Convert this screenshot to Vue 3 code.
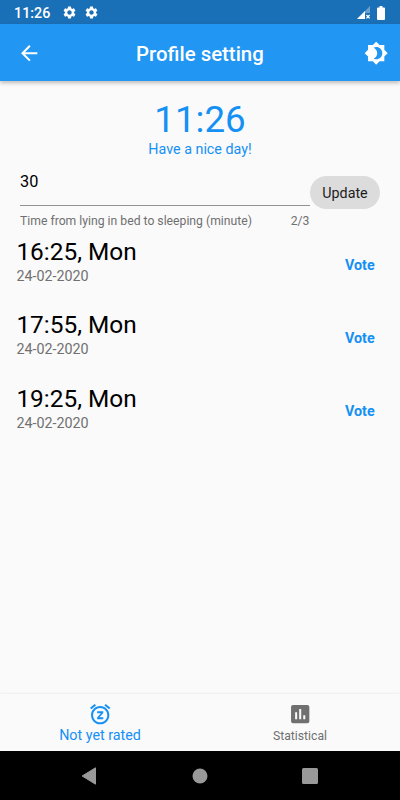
<script setup>
import { ref } from 'vue'

const minutes = ref('30')
const records = [
  { time: '16:25, Mon', date: '24-02-2020' },
  { time: '17:55, Mon', date: '24-02-2020' },
  { time: '19:25, Mon', date: '24-02-2020' },
]
const gear =
  'M19.14 12.94c.04-.3.06-.61.06-.94s-.02-.64-.07-.94l2.03-1.58c.18-.14.23-.41.12-.61l-1.92-3.32c-.12-.22-.37-.29-.59-.22l-2.39.96c-.5-.38-1.03-.7-1.62-.94l-.36-2.54c-.04-.24-.24-.41-.48-.41h-3.84c-.24 0-.43.17-.47.41l-.36 2.54c-.59.24-1.13.57-1.62.94l-2.39-.96c-.22-.08-.47 0-.59.22L2.74 8.87c-.12.21-.08.47.12.61l2.03 1.58c-.05.3-.09.63-.09.94s.02.64.07.94l-2.03 1.58c-.18.14-.23.41-.12.61l1.92 3.32c.12.22.37.29.59.22l2.39-.96c.5.38 1.03.7 1.62.94l.36 2.54c.05.24.24.41.48.41h3.84c.24 0 .44-.17.47-.41l.36-2.54c.59-.24 1.13-.56 1.62-.94l2.39.96c.22.08.47 0 .59-.22l1.92-3.32c.12-.22.07-.47-.12-.61l-2.01-1.58zM12 15.6c-1.98 0-3.6-1.62-3.6-3.6s1.62-3.6 3.6-3.6 3.6 1.62 3.6 3.6-1.62 3.6-3.6 3.6z'
</script>

<template>
  <div class="screen">
    <div class="status">
      <span class="status-time">11:26</span>
      <svg v-for="n in 2" :key="n" class="gear" viewBox="0 0 24 24"><path :d="gear" /></svg>
      <svg class="signal" viewBox="0 0 14 14">
        <path d="M13 0v7H8v6H0z" opacity=".35" />
        <path d="M8 5v8H0z" />
        <path d="M9.4 9l3.2 3.4M12.6 9l-3.2 3.4" stroke="#fff" stroke-width="1.3" />
      </svg>
      <svg class="battery" viewBox="0 0 8 14"><path d="M2.5 0h3v1.4H7q1 0 1 1V13q0 1-1 1H1q-1 0-1-1V2.4q0-1 1-1h1.5z" /></svg>
    </div>

    <header class="appbar">
      <svg class="icon" viewBox="0 0 24 24"><path d="M20 11H7.83l5.59-5.59L12 4l-8 8 8 8 1.41-1.41L7.83 13H20v-2z" /></svg>
      <h1>Profile setting</h1>
      <svg class="icon" viewBox="0 0 24 24"><path d="M20 8.69V4h-4.69L12 .69 8.69 4H4v4.69L.69 12 4 15.31V20h4.69L12 23.31 15.31 20H20v-4.69L23.31 12 20 8.69zM12 18c-.89 0-1.74-.2-2.5-.55C11.56 16.5 13 14.42 13 12s-1.44-4.5-3.5-5.45C10.26 6.2 11.11 6 12 6c3.31 0 6 2.69 6 6s-2.69 6-6 6z" /></svg>
    </header>

    <main>
      <div class="clock">11:26</div>
      <div class="greeting">Have a nice day!</div>

      <div class="form">
        <div class="field">
          <input v-model="minutes" maxlength="3" />
          <div class="helper">
            <span>Time from lying in bed to sleeping (minute)</span>
            <span>{{ minutes.length }}/3</span>
          </div>
        </div>
        <button class="update">Update</button>
      </div>

      <div v-for="r in records" :key="r.time" class="record">
        <div>
          <div class="time">{{ r.time }}</div>
          <div class="date">{{ r.date }}</div>
        </div>
        <button class="vote">Vote</button>
      </div>
    </main>

    <nav class="tabs">
      <div class="tab active">
        <svg class="tab-icon" viewBox="0 0 24 24"><path d="M7.88 3.39L6.6 1.86 2 5.71l1.29 1.53 4.59-3.85zM22 5.72l-4.6-3.86-1.29 1.53 4.6 3.86L22 5.72zM12 4c-4.97 0-9 4.03-9 9s4.02 9 9 9c4.97 0 9-4.03 9-9s-4.03-9-9-9zm0 16c-3.87 0-7-3.13-7-7s3.13-7 7-7 7 3.13 7 7-3.13 7-7 7zm-3-9h3.63L9 15.2V17h6v-2h-3.63L15 10.8V9H9v2z" /></svg>
        <span>Not yet rated</span>
      </div>
      <div class="tab">
        <svg class="tab-icon" viewBox="0 0 24 24"><path d="M19 3H5c-1.1 0-2 .9-2 2v14c0 1.1.9 2 2 2h14c1.1 0 2-.9 2-2V5c0-1.1-.9-2-2-2zM9 17H7v-7h2v7zm4 0h-2V7h2v10zm4 0h-2v-4h2v4z" /></svg>
        <span>Statistical</span>
      </div>
    </nav>

    <div class="system">
      <svg viewBox="0 0 16 18"><path d="M13.5 .8v16.4L.2 9z" stroke="#999" stroke-width="1" stroke-linejoin="round" /></svg>
      <svg viewBox="0 0 16 18"><circle cx="8" cy="9" r="7.5" /></svg>
      <svg viewBox="0 0 16 18"><rect y="1" width="16" height="16" rx="1.5" /></svg>
    </div>
  </div>
</template>

<style>
body {
  margin: 0;
}
</style>

<style scoped>
.screen {
  width: 400px;
  height: 800px;
  display: flex;
  flex-direction: column;
  overflow: hidden;
  background: #fafafa;
  color: #000;
  font-family: Roboto, sans-serif;
}
svg {
  display: block;
  fill: currentColor;
  flex: none;
  overflow: visible;
}
button,
input {
  border: 0;
  padding: 0;
  margin: 0;
  background: none;
  font-family: inherit;
  color: inherit;
  outline: 0;
}
.status {
  height: 24px;
  flex: none;
  display: flex;
  align-items: center;
  box-sizing: border-box;
  padding: 1px 15px 0 14px;
  background: #1a70b7;
  color: #fff;
}
.status-time {
  font-size: 14.3px;
  font-weight: 500;
  width: 47.5px;
}
.gear {
  width: 15px;
  height: 15px;
  margin-right: 7.5px;
}
.signal {
  width: 14px;
  height: 14px;
  margin-left: auto;
  margin-right: 6px;
}
.battery {
  width: 8px;
  height: 14px;
}
.appbar {
  height: 57px;
  flex: none;
  display: flex;
  align-items: center;
  justify-content: space-between;
  box-sizing: border-box;
  padding: 1px 12px 0 16.6px;
  background: #2196f3;
  color: #fff;
  box-shadow: 0 2px 4px rgba(0, 0, 0, 0.25);
  z-index: 1;
}
.icon,
.tab-icon {
  width: 24.4px;
  height: 24.4px;
}
h1 {
  margin: 0 0 0 -4.8px;
  padding-top: 1px;
  font-size: 20.4px;
  line-height: 24px;
  font-weight: 500;
}
main {
  flex: 1;
}
.clock {
  margin-top: 18px;
  height: 42px;
  line-height: 42px;
  text-align: center;
  font-size: 36.7px;
  color: #1590f5;
}
.greeting {
  height: 17px;
  line-height: 17px;
  text-align: center;
  font-size: 14.3px;
  color: #1590f5;
}
.form {
  display: flex;
  padding: 11px 20px 0;
}
.field {
  width: 290px;
}
input {
  display: block;
  width: 100%;
  height: 37px;
  box-sizing: border-box;
  padding-bottom: 12px;
  border-bottom: 1px solid #929292;
  font-size: 16.3px;
}
.helper {
  display: flex;
  justify-content: space-between;
  padding: 8px 0.6px 0 0;
  font-size: 12.2px;
  line-height: 14px;
  color: #707070;
}
.update {
  width: 70px;
  height: 33px;
  margin-top: 7px;
  border-radius: 17px;
  background: #dcdcdc;
  color: #1c1c1c;
  font-size: 14.3px;
}
.record {
  display: flex;
  justify-content: space-between;
  height: 64.3px;
  padding: 9px 25.4px 0 16.4px;
}
.time {
  font-size: 24.4px;
  line-height: 29px;
}
.date {
  margin-top: 2px;
  font-size: 14.3px;
  line-height: 17px;
  color: #707070;
}
.vote {
  height: 55.4px;
  font-size: 14.3px;
  font-weight: 700;
  color: #1590f5;
}
.tabs {
  height: 57px;
  flex: none;
  display: flex;
  box-shadow: 0 -1px 2px rgba(0, 0, 0, 0.05);
}
.tab {
  flex: 1;
  display: flex;
  flex-direction: column;
  align-items: center;
  padding-top: 8px;
  color: #707070;
  font-size: 12.2px;
  line-height: 20px;
}
.tab.active {
  color: #1590f5;
  font-size: 14.3px;
  line-height: 18px;
}
.system {
  height: 49px;
  flex: none;
  display: flex;
  align-items: center;
  justify-content: center;
  gap: 94px;
  background: #000;
  color: #999;
}
.system svg {
  width: 16px;
  height: 18px;
}
</style>
